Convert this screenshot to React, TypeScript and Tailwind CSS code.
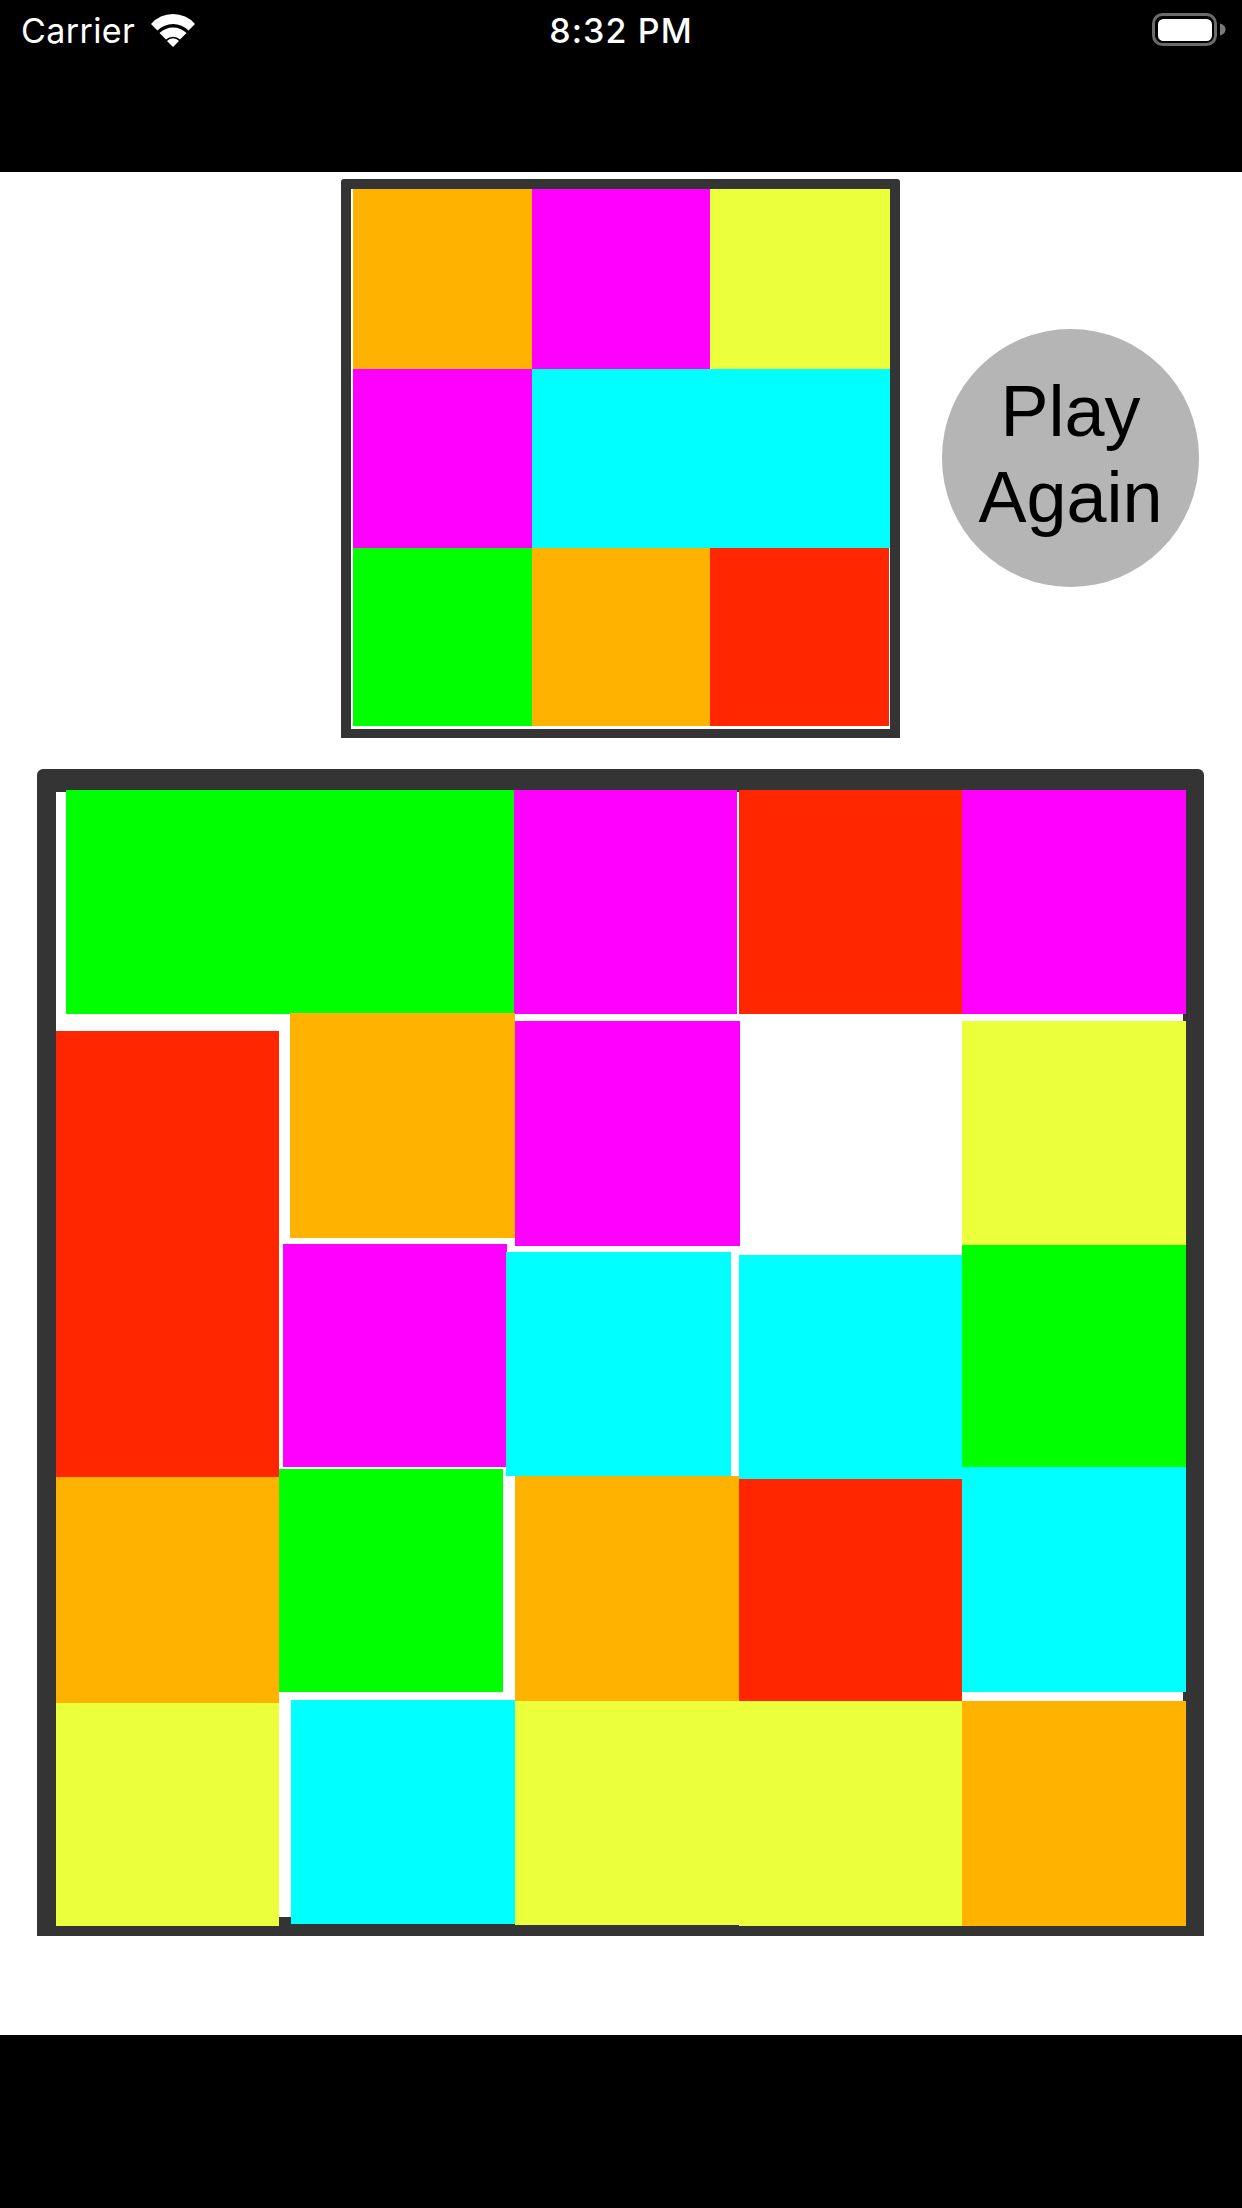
const targetTiles = [
  { id: "a", className: "bg-[#ffb300]" },
  { id: "b", className: "bg-[#ff00ff]" },
  { id: "c", className: "bg-[#ebff3b]" },
  { id: "d", className: "bg-[#ff00ff]" },
  { id: "e", className: "col-span-2 bg-[#00ffff]" },
  { id: "f", className: "bg-[#00ff00]" },
  { id: "g", className: "bg-[#ffb300]" },
  { id: "h", className: "bg-[#ff2600] mr-[1px]" },
];

// pieces sit where the player dropped them, so they are placed by hand
const boardTiles = [
  "left-[10px] top-[-2px] w-[448px] h-[224px] bg-[#00ff00]",
  "left-[458px] top-[-2px] w-[223px] h-[224px] bg-[#ff00ff]",
  "left-[683px] top-[-2px] w-[223px] h-[224px] bg-[#ff2600]",
  "left-[906px] top-[-2px] w-[224px] h-[224px] bg-[#ff00ff]",
  "left-[0px] top-[239px] w-[223px] h-[446px] bg-[#ff2600]",
  "left-[234px] top-[221px] w-[225px] h-[225px] bg-[#ffb300]",
  "left-[459px] top-[229px] w-[225px] h-[225px] bg-[#ff00ff]",
  "left-[906px] top-[229px] w-[224px] h-[224px] bg-[#ebff3b]",
  "left-[906px] top-[453px] w-[224px] h-[222px] bg-[#00ff00]",
  "left-[227px] top-[452px] w-[224px] h-[223px] bg-[#ff00ff]",
  "left-[450px] top-[460px] w-[225px] h-[224px] bg-[#00ffff]",
  "left-[683px] top-[463px] w-[223px] h-[224px] bg-[#00ffff]",
  "left-[0px] top-[685px] w-[223px] h-[226px] bg-[#ffb300]",
  "left-[223px] top-[677px] w-[224px] h-[223px] bg-[#00ff00]",
  "left-[459px] top-[684px] w-[224px] h-[225px] bg-[#ffb300]",
  "left-[683px] top-[687px] w-[223px] h-[222px] bg-[#ff2600]",
  "left-[906px] top-[675px] w-[224px] h-[225px] bg-[#00ffff]",
  "left-[0px] top-[911px] w-[223px] h-[223px] bg-[#ebff3b]",
  "left-[235px] top-[908px] w-[224px] h-[224px] bg-[#00ffff]",
  "left-[459px] top-[909px] w-[224px] h-[224px] bg-[#ebff3b]",
  "left-[683px] top-[909px] w-[223px] h-[225px] bg-[#ebff3b]",
  "left-[906px] top-[909px] w-[224px] h-[225px] bg-[#ffb300]",
];

const WifiIcon = () => (
  <svg width="44" height="33" viewBox="0 0 44 33" fill="white">
    <path d="M0 10 A29.2 29.2 0 0 1 44 10 L37.5 16.5 A21.7 21.7 0 0 0 6.5 16.5 Z" />
    <path d="M8.5 19 A19.3 19.3 0 0 1 35.5 19 L29 25.5 A10 10 0 0 0 15 25.5 Z" />
    <path d="M16 27 A8 8 0 0 1 28 27 L22 33 Z" />
  </svg>
);

const BatteryIcon = () => (
  <svg width="74" height="34" viewBox="0 0 74 34">
    <rect x="1.5" y="1.5" width="62" height="30" rx="9" fill="none" stroke="#6b6b6b" strokeWidth="3" />
    <rect x="6" y="6" width="54" height="22" rx="5.5" fill="white" />
    <path d="M68 10.5 C72 11.5 73.5 14 73.5 16.5 C73.5 19 72 21.5 68 22.5 Z" fill="#7a7a7a" />
  </svg>
);

const StatusBar = () => (
  <div className="h-[172px] bg-black text-white font-['Inter',sans-serif]">
    <div className="grid h-[60px] grid-cols-[1fr_auto_1fr] items-center px-[21px]">
      <div className="flex items-center gap-[16px]">
        <span className="mt-[2px] text-[34px] leading-[40px] tracking-[0.4px]">Carrier</span>
        <WifiIcon />
      </div>
      <span className="mt-[2px] text-[34px] leading-[40px] font-medium tracking-[1.1px]">8:32 PM</span>
      <div className="-mr-[5px] flex justify-end">
        <BatteryIcon />
      </div>
    </div>
  </div>
);

const App = () => {
  return (
    <div className="flex h-[2208px] w-[1242px] flex-col bg-white">
      <StatusBar />
      <div className="flex-grow">
        <div className="mt-[7px] ml-[341px] flex items-center gap-[42px]">
          <div className="h-[559px] w-[559px] rounded-t-[3px] bg-[#343434] pt-[10px] pr-[10px] pb-[9px] pl-[10px]">
            <div className="grid h-full grid-cols-[179px_178px_180px] grid-rows-[180px_179px_178px] bg-white pl-[2px]">
              {targetTiles.map((tile) => (
                <div key={tile.id} className={tile.className} />
              ))}
            </div>
          </div>
          <button className="mb-[1px] flex h-[258px] w-[257px] flex-col items-center justify-center rounded-full bg-[#b5b5b5] pb-[9px] font-['Liberation_Sans',sans-serif] text-[72px] leading-[86px] text-black">
            <span>Play</span>
            <span>Again</span>
          </button>
        </div>
        <div className="mt-[31px] ml-[37px] h-[1167px] w-[1167px] rounded-t-[6px] bg-[#343434] pt-[23px] pr-[21px] pb-[19px] pl-[19px]">
          <div className="relative h-full bg-white">
            {boardTiles.map((tile, index) => (
              <div key={index} className={"absolute " + tile} />
            ))}
          </div>
        </div>
      </div>
      <div className="h-[173px] bg-black" />
    </div>
  );
};

export default App;
